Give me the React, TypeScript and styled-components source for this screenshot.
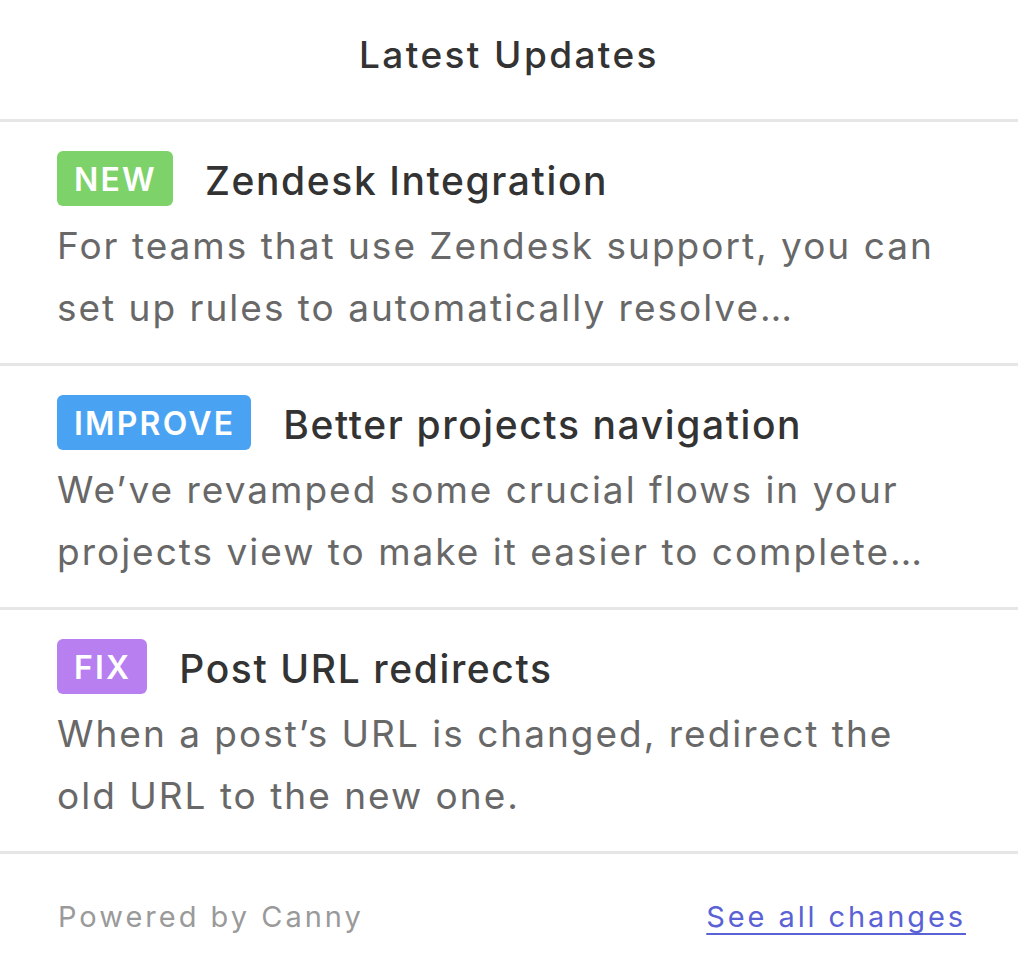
import React from 'react';
import styled, { createGlobalStyle } from 'styled-components';

const GlobalStyle = createGlobalStyle`
	html, body {
		margin: 0;
		padding: 0;
		background: #ffffff;
	}
	body {
		font-family: Inter, 'Noto Sans', sans-serif;
		-webkit-font-smoothing: antialiased;
	}
`;

const Panel = styled.div`
	width: 1018px;
	min-height: 974px;
	background: #ffffff;
	display: flex;
	flex-direction: column;
`;

const Header = styled.div`
	height: 122px;
	display: flex;
	align-items: center;
	justify-content: center;
	border-bottom: 3px solid #e6e6e6;
	box-sizing: border-box;
	padding-bottom: 10px;
`;

const HeaderTitle = styled.h1`
	margin: 0;
	font-size: 37px;
	font-weight: 500;
	color: #333333;
	letter-spacing: 2.4px;
`;

const Entry = styled.div`
	padding: 29px 40px 24px 57px;
	border-bottom: 3px solid #e6e6e6;
	display: flex;
	flex-direction: column;
	gap: 9px;
`;

const TitleRow = styled.div`
	display: flex;
	align-items: center;
	gap: 32px;
	height: 55px;
`;

const Tag = styled.span<{ $color: string }>`
	display: inline-flex;
	align-items: center;
	height: 55px;
	padding: 2px 16px 0 17px;
	border-radius: 6px;
	background: ${(p) => p.$color};
	color: #ffffff;
	font-size: 32px;
	font-weight: 600;
	letter-spacing: 2.2px;
	box-sizing: border-box;
`;

const EntryTitle = styled.span`
	font-size: 39px;
	font-weight: 500;
	color: #333333;
	letter-spacing: 1.6px;
	padding-top: 4px;
`;

const Description = styled.p`
	margin: 0;
	font-size: 37px;
	line-height: 62px;
	color: #686868;
	font-weight: 400;
	letter-spacing: 2px;
`;

const Footer = styled.div`
	flex: 1;
	display: flex;
	align-items: center;
	justify-content: space-between;
	padding: 2px 52px 0 58px;
	min-height: 121px;
`;

const Powered = styled.span`
	font-size: 29px;
	color: #9a9a9a;
	letter-spacing: 3px;
`;

const SeeAll = styled.a`
	font-size: 29px;
	color: #5a62d5;
	letter-spacing: 2.9px;
	text-decoration: underline;
	text-underline-offset: 6px;
	text-decoration-thickness: 2px;
`;

const updates = [
	{
		tag: 'NEW',
		color: '#7ed26a',
		title: 'Zendesk Integration',
		lines: ['For teams that use Zendesk support, you can', 'set up rules to automatically resolve…'],
	},
	{
		tag: 'IMPROVE',
		color: '#4aa3f2',
		title: 'Better projects navigation',
		lines: ['We’ve revamped some crucial flows in your', 'projects view to make it easier to complete…'],
	},
	{
		tag: 'FIX',
		color: '#b77ff0',
		title: 'Post URL redirects',
		lines: ['When a post’s URL is changed, redirect the', 'old URL to the new one.'],
	},
];

const App = () => {
	return (
		<>
			<GlobalStyle />
			<Panel>
				<Header>
					<HeaderTitle>Latest Updates</HeaderTitle>
				</Header>
				{updates.map((u) => (
					<Entry key={u.title}>
						<TitleRow>
							<Tag $color={u.color}>{u.tag}</Tag>
							<EntryTitle>{u.title}</EntryTitle>
						</TitleRow>
						<Description>
							{u.lines[0]}
							<br />
							{u.lines[1]}
						</Description>
					</Entry>
				))}
				<Footer>
					<Powered>Powered by Canny</Powered>
					<SeeAll href="#">See all changes</SeeAll>
				</Footer>
			</Panel>
		</>
	);
};

export default App;
